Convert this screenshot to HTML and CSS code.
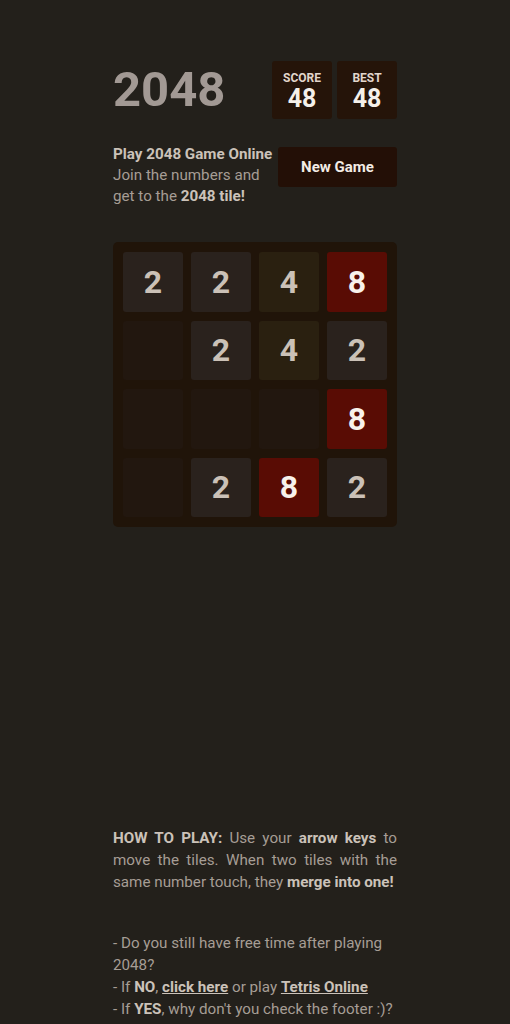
FILE: index.html
```html
<!DOCTYPE html>
<html>
<head>
<meta charset="utf-8">
<link rel="stylesheet" href="styles.css">
</head>
<body>
<div class="container">
  <header class="heading">
    <h1 class="title">2048</h1>
    <div class="scores">
      <div class="score-box"><span class="label">SCORE</span><span class="value">48</span></div>
      <div class="score-box"><span class="label">BEST</span><span class="value">48</span></div>
    </div>
  </header>
  <div class="intro">
    <p class="intro-text"><strong>Play 2048 Game Online</strong><br>Join the numbers and<br>get to the <strong>2048 tile!</strong></p>
    <a class="new-game">New Game</a>
  </div>
  <div class="board">
    <div class="tile t2">2</div><div class="tile t2">2</div><div class="tile t4">4</div><div class="tile t8">8</div>
    <div class="tile"></div><div class="tile t2">2</div><div class="tile t4">4</div><div class="tile t2">2</div>
    <div class="tile"></div><div class="tile"></div><div class="tile"></div><div class="tile t8">8</div>
    <div class="tile"></div><div class="tile t2">2</div><div class="tile t8">8</div><div class="tile t2">2</div>
  </div>
  <p class="howto"><strong>HOW TO PLAY:</strong> Use your <strong>arrow keys</strong> to move the tiles. When two tiles with the same number touch, they <strong>merge into one!</strong></p>
  <p class="extra">- Do you still have free time after playing 2048?<br>- If <strong>NO</strong>, <a class="link">click here</a> or play <a class="link">Tetris Online</a><br>- If <strong>YES</strong>, why don't you check the footer :)?</p>
</div>
</body>
</html>
```
FILE: styles.css
```css
html, body {
  margin: 0;
  padding: 0;
  background: #23201b;
}
body {
  font-family: Roboto, "Liberation Sans", sans-serif;
  color: #aaa198;
}
.container {
  width: 284px;
  margin: 0 auto;
  padding-top: 61px;
}
.heading {
  display: flex;
  justify-content: space-between;
  align-items: flex-start;
}
.title {
  margin: 0;
  font-size: 49px;
  font-weight: 700;
  color: #a29994;
  line-height: 58px;
}
.scores {
  display: flex;
  gap: 5px;
}
.score-box {
  width: 60px;
  height: 58px;
  background: #251409;
  border-radius: 3px;
  display: flex;
  flex-direction: column;
  align-items: center;
  padding-top: 10px;
  box-sizing: border-box;
}
.label {
  font-size: 12px;
  font-weight: 700;
  color: #e2d6cc;
  line-height: 14px;
}
.value {
  font-size: 25px;
  font-weight: 700;
  color: #f5f0ea;
  line-height: 28px;
}
.intro {
  display: flex;
  justify-content: space-between;
  align-items: flex-start;
  margin-top: 25px;
}
.intro-text {
  margin: 0;
  font-size: 15.2px;
  line-height: 21px;
  color: #a69d95;
  white-space: nowrap;
}
.intro-text strong {
  color: #cbc2b9;
}
.new-game {
  width: 119px;
  height: 40px;
  margin-top: 3px;
  background: #230f06;
  border-radius: 3px;
  color: #f3ece5;
  font-weight: 700;
  font-size: 15px;
  display: flex;
  align-items: center;
  justify-content: center;
}
.board {
  margin-top: 35px;
  width: 284px;
  height: 285px;
  box-sizing: border-box;
  padding: 10px;
  background: #201409;
  border-radius: 5px;
  display: grid;
  grid-template-columns: repeat(4, 1fr);
  grid-template-rows: repeat(4, 1fr);
  gap: 9px 8px;
}
.tile {
  background: #22170f;
  border-radius: 3px;
  display: flex;
  align-items: center;
  justify-content: center;
  font-size: 32px;
  font-weight: 700;
  color: #cbc1b7;
}
.t2 { background: #2a221d; }
.t4 { background: #2a2010; }
.t8 { background: #590c04; color: #f8f2ec; }
.howto {
  margin: 300px 0 0;
  font-size: 15.2px;
  line-height: 22px;
  text-align: justify;
  color: #a69d95;
}
.howto strong, .extra strong {
  color: #cbc2b9;
}
.extra {
  margin: 39px 0 0;
  font-size: 15.2px;
  line-height: 22px;
  color: #a69d95;
}
.link {
  color: #cbc2b9;
  font-weight: 700;
  text-decoration: underline;
}
```
